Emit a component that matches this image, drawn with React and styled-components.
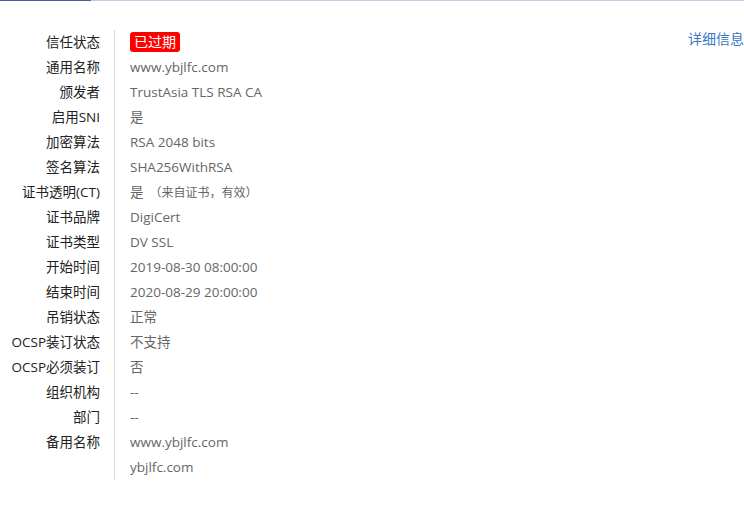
import styled, { createGlobalStyle } from "styled-components";

const GlobalStyle = createGlobalStyle`
  html, body {
    margin: 0;
    padding: 0;
    background: #fff;
  }
  body {
    font-family: "Open Sans", "Noto Sans CJK SC", sans-serif;
    font-size: 13.5px;
  }
`;

const rows = [
  { label: "信任状态", badge: "已过期" },
  { label: "通用名称", value: "www.ybjlfc.com" },
  { label: "颁发者", value: "TrustAsia TLS RSA CA" },
  { label: "启用SNI", value: "是" },
  { label: "加密算法", value: "RSA 2048 bits" },
  { label: "签名算法", value: "SHA256WithRSA" },
  { label: "证书透明(CT)", value: "是", note: "（来自证书，有效）" },
  { label: "证书品牌", value: "DigiCert" },
  { label: "证书类型", value: "DV SSL" },
  { label: "开始时间", value: "2019-08-30 08:00:00" },
  { label: "结束时间", value: "2020-08-29 20:00:00" },
  { label: "吊销状态", value: "正常" },
  { label: "OCSP装订状态", value: "不支持" },
  { label: "OCSP必须装订", value: "否" },
  { label: "组织机构", value: "--" },
  { label: "部门", value: "--" },
  { label: "备用名称", value: "www.ybjlfc.com" },
  { label: "", value: "ybjlfc.com" },
];

const App = () => {
  return (
    <Page>
      <GlobalStyle />
      <TabLine>
        <ActiveTab />
      </TabLine>
      <Panel>
        <Table>
          {rows.map((row, i) => (
            <Row key={i}>
              <Label>{row.label}</Label>
              <Value>
                {row.badge && <Badge>{row.badge}</Badge>}
                {row.value}
                {row.note && <Note>{row.note}</Note>}
              </Value>
            </Row>
          ))}
        </Table>
        <DetailLink href="#">详细信息</DetailLink>
      </Panel>
    </Page>
  );
};

export default App;

const Page = styled.div`
  width: 744px;
  height: 508px;
  overflow: hidden;
`;

const TabLine = styled.div`
  height: 1px;
  background: #c9cbe0;
  display: flex;
`;

const ActiveTab = styled.div`
  width: 91px;
  height: 1px;
  background: #4a5da4;
`;

const Panel = styled.div`
  display: flex;
  justify-content: space-between;
  align-items: flex-start;
  padding-top: 29px;
`;

const Table = styled.div`
  display: flex;
  flex-direction: column;
`;

const Row = styled.div`
  display: grid;
  grid-template-columns: 114px 1fr;
  height: 25px;
  line-height: 25px;
`;

const Label = styled.div`
  text-align: right;
  padding-right: 14px;
  color: #222;
  white-space: nowrap;
`;

const Value = styled.div`
  border-left: 1px solid #dcdcdc;
  padding-left: 15px;
  color: #666;
  white-space: nowrap;
  display: flex;
  align-items: center;
`;

const Badge = styled.span`
  display: inline-block;
  background: #ff0000;
  color: #fff;
  font-size: 14px;
  line-height: 20px;
  height: 20px;
  padding: 0 4px;
  border-radius: 3px;
  margin-top: -2px;
`;

const Note = styled.span`
  font-size: 12px;
  margin-left: 6px;
`;

const DetailLink = styled.a`
  color: #3a78bf;
  text-decoration: none;
  font-size: 14px;
  line-height: 20px;
  margin-top: -1px;
  white-space: nowrap;
`;
